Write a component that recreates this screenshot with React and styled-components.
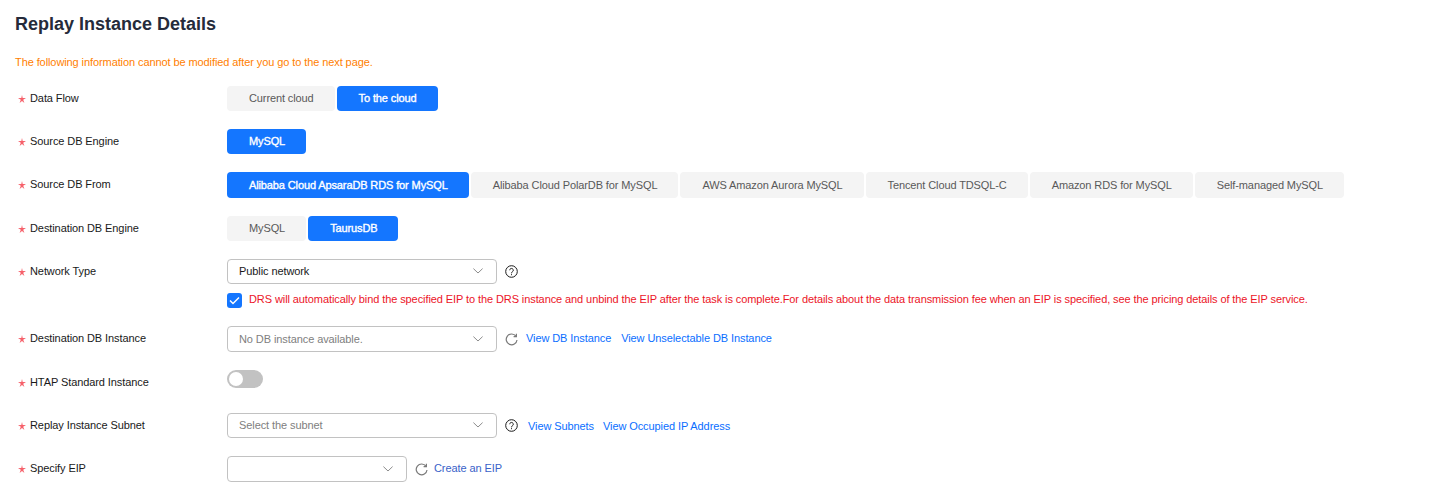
import styled, { createGlobalStyle } from "styled-components";

const GlobalStyle = createGlobalStyle`
  html, body {
    margin: 0;
    background: #fff;
    font-family: "Liberation Sans", Arial, sans-serif;
    font-size: 11px;
    letter-spacing: -0.09px;
    color: #252b3a;
  }
`;

const Page = styled.div`
  width: 1434px;
  height: 500px;
  overflow: hidden;
  padding: 14px 15px 0;
  box-sizing: border-box;
`;

const Title = styled.h2`
  margin: 0;
  font-size: 18px;
  line-height: 20px;
  font-weight: 700;
  letter-spacing: 0;
  color: #252b3a;
`;

const Notice = styled.p`
  margin: 21px 0 17px;
  line-height: 14px;
  color: #ff8000;
`;

const Form = styled.div`
  display: flex;
  flex-direction: column;
  gap: 18px;
`;

const Row = styled.div`
  display: flex;
  align-items: flex-start;
`;

const Label = styled.div`
  width: 212px;
  flex: none;
  height: 25px;
  display: flex;
  align-items: center;
  gap: 4px;
  padding: 0 0 1px 3px;
  box-sizing: border-box;
  color: #191919;
`;

const StarIcon = styled.svg`
  width: 8px;
  height: 8px;
  flex: none;
  position: relative;
  top: 1px;
  fill: #f6606a;
`;

const Control = styled.div`
  display: flex;
  flex-direction: column;
  gap: 8px;
`;

const Inline = styled.div`
  display: flex;
  align-items: center;
  min-height: ${({ $tall }) => ($tall ? "26px" : "25px")};
`;

const Group = styled.div`
  display: flex;
  gap: 2px;
`;

const Choice = styled.button`
  height: ${({ $tall }) => ($tall ? "26px" : "25px")};
  padding: 0 21px 1px 22px;
  border: 0;
  border-radius: 4px;
  font-family: inherit;
  font-size: 11px;
  letter-spacing: ${({ $active }) => ($active ? "-0.12px" : "-0.11px")};
  background: ${({ $active }) => ($active ? "#1476ff" : "#f4f4f4")};
  color: ${({ $active }) => ($active ? "#fff" : "#595959")};
  -webkit-text-stroke: ${({ $active }) => ($active ? "0.35px #fff" : "0")};
`;

const Select = styled.div`
  width: ${({ $width }) => $width || 270}px;
  height: ${({ $tall }) => ($tall ? "26px" : "25px")};
  box-sizing: border-box;
  flex: none;
  display: flex;
  align-items: center;
  justify-content: space-between;
  padding: 0 13px 1px 11px;
  border: 1px solid #c2c2c2;
  border-radius: 4px;
  color: ${({ $placeholder }) => ($placeholder ? "#808080" : "#191919")};
  background: #fff;
`;

const ChevronIcon = styled.svg`
  width: 10px;
  height: 6px;
  flex: none;
  fill: none;
  stroke: #8c8c8c;
  stroke-width: 1;
`;

const HelpIcon = styled.svg`
  width: 13px;
  height: 13px;
  flex: none;
  margin-left: 8px;
  fill: none;
  stroke: #191919;
  stroke-width: 1;
`;

const RefreshIcon = styled.svg`
  width: 13px;
  height: 13px;
  flex: none;
  margin-left: 8px;
  fill: none;
  stroke: #7a7a7a;
  stroke-width: 1.2;
`;

const Links = styled.div`
  display: flex;
  gap: ${({ $gap }) => $gap || 10}px;
  margin-left: ${({ $offset }) => $offset}px;
  padding-bottom: ${({ $lift }) => $lift || 0}px;
`;

const Link = styled.a`
  color: ${({ $muted }) => ($muted ? "#3a62c9" : "#0a6eff")};
`;

const Warning = styled.div`
  display: flex;
  align-items: center;
  gap: 7px;
  height: 16px;
  color: #ec1427;
`;

const WarningText = styled.span`
  padding-bottom: 2px;
`;

const Tick = styled.span`
  width: 15px;
  height: 15px;
  border-radius: 3px;
  background: #1476ff;
  display: flex;
  align-items: center;
  justify-content: center;
`;

const TickIcon = styled.svg`
  width: 11px;
  height: 9px;
  fill: none;
  stroke: #fff;
  stroke-width: 1.5;
`;

const Switch = styled.div`
  width: 36px;
  height: 18px;
  border-radius: 9px;
  background: #c2c2c2;
  padding: 2px;
  box-sizing: border-box;
  &::before {
    content: "";
    display: block;
    width: 14px;
    height: 14px;
    border-radius: 50%;
    background: #fff;
  }
`;

const Star = () => (
  <StarIcon viewBox="0 0 8 8">
    <polygon points="4,0 4.7,3.1 8,3.1 5.2,4.8 6.4,8 4,6 1.6,8 2.8,4.8 0,3.1 3.3,3.1" />
  </StarIcon>
);

const Chevron = () => (
  <ChevronIcon viewBox="0 0 10 6">
    <path d="M0.4 0.6 L5 5 L9.6 0.6" />
  </ChevronIcon>
);

const Help = () => (
  <HelpIcon viewBox="0 0 13 13">
    <circle cx="6.5" cy="6.5" r="5.8" />
    <path d="M4.7 5.2 A1.8 1.8 0 1 1 7.4 6.8 C6.7 7.2 6.5 7.5 6.5 8.3" />
    <path d="M6.5 9.2 V10.2" />
  </HelpIcon>
);

const Refresh = () => (
  <RefreshIcon viewBox="0 0 13 13">
    <path d="M11 3.2 A5.4 5.4 0 1 0 12 7" />
    <path d="M11.4 0.8 V3.6 H8.6" />
  </RefreshIcon>
);

const Field = ({ label, children }) => (
  <Row>
    <Label>
      <Star />
      {label}
    </Label>
    <Control>{children}</Control>
  </Row>
);

const Choices = ({ items, active, tall }) => (
  <Group>
    {items.map((item) => (
      <Choice key={item} $active={item === active} $tall={tall}>
        {item}
      </Choice>
    ))}
  </Group>
);

const sources = [
  "Alibaba Cloud ApsaraDB RDS for MySQL",
  "Alibaba Cloud PolarDB for MySQL",
  "AWS Amazon Aurora MySQL",
  "Tencent Cloud TDSQL-C",
  "Amazon RDS for MySQL",
  "Self-managed MySQL",
];

export default function App() {
  return (
    <Page>
      <GlobalStyle />
      <Title>Replay Instance Details</Title>
      <Notice>The following information cannot be modified after you go to the next page.</Notice>
      <Form>
        <Field label="Data Flow">
          <Choices items={["Current cloud", "To the cloud"]} active="To the cloud" />
        </Field>
        <Field label="Source DB Engine">
          <Choices items={["MySQL"]} active="MySQL" />
        </Field>
        <Field label="Source DB From">
          <Choices items={sources} active={sources[0]} tall />
        </Field>
        <Field label="Destination DB Engine">
          <Choices items={["MySQL", "TaurusDB"]} active="TaurusDB" />
        </Field>
        <Field label="Network Type">
          <Inline>
            <Select>
              Public network
              <Chevron />
            </Select>
            <Help />
          </Inline>
          <Warning>
            <Tick>
              <TickIcon viewBox="0 0 11 9">
                <path d="M1 4.5 L4 7.5 L10 1.5" />
              </TickIcon>
            </Tick>
            <WarningText>
              DRS will automatically bind the specified EIP to the DRS instance and unbind the EIP after the task is complete.For details about the data transmission fee when an EIP is specified, see the pricing details of the EIP service.
            </WarningText>
          </Warning>
        </Field>
        <Field label="Destination DB Instance">
          <Inline $tall>
            <Select $placeholder $tall>
              No DB instance available.
              <Chevron />
            </Select>
            <Refresh />
            <Links $offset={8} $lift={2}>
              <Link>View DB Instance</Link>
              <Link>View Unselectable DB Instance</Link>
            </Links>
          </Inline>
        </Field>
        <Field label="HTAP Standard Instance">
          <Switch />
        </Field>
        <Field label="Replay Instance Subnet">
          <Inline>
            <Select $placeholder>
              Select the subnet
              <Chevron />
            </Select>
            <Help />
            <Links $offset={10} $gap={9}>
              <Link>View Subnets</Link>
              <Link>View Occupied IP Address</Link>
            </Links>
          </Inline>
        </Field>
        <Field label="Specify EIP">
          <Inline $tall>
            <Select $width={180} $tall>
              <span />
              <Chevron />
            </Select>
            <Refresh />
            <Links $offset={6} $lift={2}>
              <Link $muted>Create an EIP</Link>
            </Links>
          </Inline>
        </Field>
      </Form>
    </Page>
  );
}
